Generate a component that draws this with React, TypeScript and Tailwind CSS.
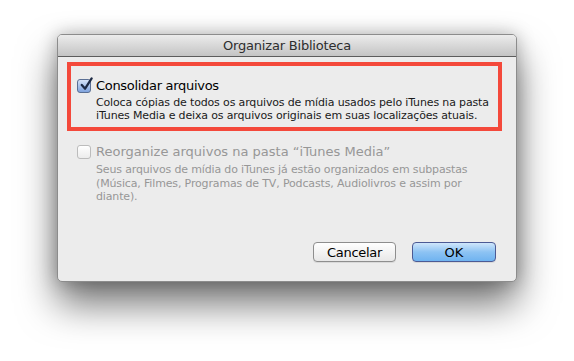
function CheckBox({ checked, disabled }: { checked?: boolean; disabled?: boolean }) {
  if (checked) {
    return (
      <div className="relative w-[14px] h-[14px] shrink-0 rounded-[3px] border border-[#5a6f94] bg-gradient-to-b from-[#d6e3f7] via-[#a9c2ea] to-[#7fa3dd]">
        <svg viewBox="0 0 16 16" className="absolute -top-[3px] left-[1px] w-[15px] h-[15px]">
          <path d="M3 8.5 L6.5 12.5 L13.5 1.5" fill="none" stroke="#1d2a44" strokeWidth="2.4" strokeLinecap="round" strokeLinejoin="round" />
        </svg>
      </div>
    )
  }
  return (
    <div
      className={`w-[14px] h-[14px] shrink-0 rounded-[3px] border bg-gradient-to-b from-white to-[#ececec] ${
        disabled ? 'border-[#bcbcbc]' : 'border-[#8a8a8a]'
      }`}
    />
  )
}

export default function App() {
  return (
    <div
      className="w-[574px] h-[361px] bg-white overflow-hidden pt-[34px] pl-[57px]"
      style={{ fontFamily: '"DejaVu Sans", Verdana, sans-serif' }}
    >
      <div className="w-[460px] h-[248px] flex flex-col rounded-[5px] bg-[#ececec] border border-[#8c8c8c] shadow-[0_22px_38px_rgba(0,0,0,0.55),0_0_18px_rgba(0,0,0,0.25)] overflow-hidden">
        <div className="h-[22px] shrink-0 flex items-center justify-center bg-gradient-to-b from-[#ececec] to-[#c4c4c4] border-b border-[#5c5c5c] text-[13px] tracking-[-0.2px] text-[#2e2e2e]">
          Organizar Biblioteca
        </div>

        <div className="flex-1 flex flex-col pl-[9px] pr-[14px] pt-[5px]">
          <div className="border-[4px] border-[#f4493b] pl-[6px] pt-[12px] pb-[5px]">
            <div className="flex items-center gap-[5px]">
              <CheckBox checked />
              <span className="text-[13px] tracking-[-0.3px] text-black leading-[16px]">Consolidar arquivos</span>
            </div>
            <div className="pl-[19px] pt-[2px] text-[11px] tracking-[-0.15px] leading-[13px] text-[#1a1a1a]">
              <div>Coloca cópias de todos os arquivos de mídia usados pelo iTunes na pasta</div>
              <div>iTunes Media e deixa os arquivos originais em suas localizações atuais.</div>
            </div>
          </div>

          <div className="pl-[10px] pt-[13px]">
            <div className="flex items-center gap-[5px]">
              <CheckBox disabled />
              <span className="text-[13px] tracking-[0px] text-[#979797] leading-[16px]">Reorganize arquivos na pasta “iTunes Media”</span>
            </div>
            <div className="pl-[19px] pt-[3px] text-[11px] tracking-[-0.15px] leading-[13.5px] text-[#979797]">
              <div>Seus arquivos de mídia do iTunes já estão organizados em subpastas</div>
              <div>(Música, Filmes, Programas de TV, Podcasts, Audiolivros e assim por</div>
              <div>diante).</div>
            </div>
          </div>

          <div className="mt-auto mb-[19px] flex justify-end gap-[16px] pr-[6px]">
            <button className="w-[83px] h-[20px] rounded-[4px] border border-[#8e8e8e] bg-gradient-to-b from-white to-[#e8e8e8] text-[13px] tracking-[-0.3px] text-black shadow-[0_1px_0_rgba(0,0,0,0.08)]">
              Cancelar
            </button>
            <button className="w-[84px] h-[20px] rounded-[4px] border border-[#4c5a94] bg-gradient-to-b from-[#cfe6fb] via-[#8dc3f3] to-[#6fb3f0] text-[13px] text-black shadow-[0_1px_0_rgba(0,0,0,0.08)]">
              OK
            </button>
          </div>
        </div>
      </div>
    </div>
  )
}
